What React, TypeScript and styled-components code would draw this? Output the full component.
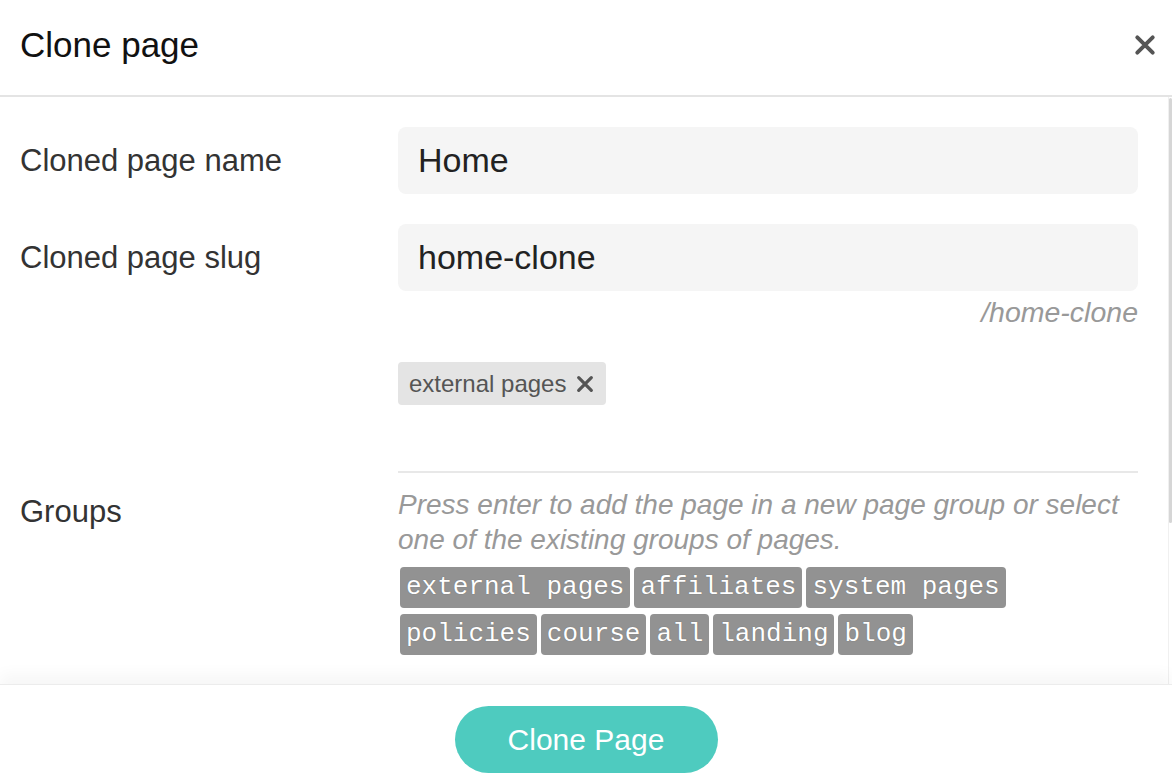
import React from 'react';
import styled, { createGlobalStyle } from 'styled-components';

const Global = createGlobalStyle`
  html, body { margin: 0; padding: 0; background: #fff; }
  body { font-family: "Liberation Sans", Arial, Helvetica, sans-serif; }
  * { box-sizing: border-box; }
`;

const Modal = styled.div`
  width: 1172px;
  height: 782px;
  display: flex;
  flex-direction: column;
  background: #fff;
  overflow: hidden;
`;

const Header = styled.header`
  height: 97px;
  flex: none;
  display: flex;
  align-items: center;
  justify-content: space-between;
  padding: 0 16px 6px 20px;
  border-bottom: 2px solid #e4e4e4;
`;

const Title = styled.h1`
  margin: 0;
  font-size: 35px;
  font-weight: 400;
  line-height: 1;
  color: #111;
`;

const CloseButton = styled.button`
  border: 0;
  background: none;
  padding: 0;
  width: 22px;
  height: 22px;
  display: flex;
  align-items: center;
  justify-content: center;
  cursor: pointer;
`;

const Body = styled.div`
  flex: 1;
  display: flex;
  min-height: 0;
`;

const Content = styled.div`
  flex: 1;
  padding: 30px 30px 0 20px;
`;

const ScrollTrack = styled.div`
  width: 4px;
  flex: none;
  display: flex;
  flex-direction: column;
  padding: 1px 0 4px;
  border-left: 1px solid #f0f0f0;
`;

const ScrollThumb = styled.div`
  height: 425px;
  background: #d6d6d6;
  border-radius: 2px;
`;

const Row = styled.div<{ $mt?: number }>`
  display: grid;
  grid-template-columns: 378px 1fr;
  align-items: start;
  margin-top: ${(p) => p.$mt ?? 0}px;
`;

const Label = styled.label<{ $lh?: number }>`
  font-size: 31px;
  color: #333;
  line-height: ${(p) => p.$lh ?? 67}px;
`;

const Field = styled.div`
  display: flex;
  flex-direction: column;
`;

const Input = styled.input`
  height: 67px;
  width: 100%;
  border: 0;
  outline: none;
  border-radius: 8px;
  background: #f5f5f5;
  padding: 0 20px;
  font-family: "Liberation Sans", Arial, sans-serif;
  font-size: 34px;
  color: #222;
`;

const Hint = styled.div`
  margin-top: 4px;
  text-align: right;
  font-style: italic;
  font-size: 28.5px;
  line-height: 34px;
  color: #999;
`;

const Tag = styled.span`
  display: inline-flex;
  align-items: center;
  gap: 10px;
  height: 43px;
  margin-top: 33px;
  padding: 0 12px 0 11px;
  border-radius: 4px;
  background: #e4e4e4;
  color: #555;
  font-size: 24px;
  align-self: flex-start;
`;

const Divider = styled.hr`
  margin: 66px 0 0;
  border: 0;
  border-top: 2px solid #e8e8e8;
`;

const Help = styled.p`
  margin: 0;
  font-style: italic;
  font-size: 28px;
  line-height: 35px;
  color: #999;
`;

const Chips = styled.div`
  margin-top: 10px;
  display: flex;
  flex-wrap: wrap;
  gap: 6px 4px;
  padding-left: 2px;
`;

const Chip = styled.span`
  display: inline-block;
  height: 41px;
  line-height: 41px;
  padding: 0 6px;
  border-radius: 4px;
  background: #929292;
  color: #fff;
  font-family: "Liberation Mono", "Courier New", monospace;
  font-size: 26px;
  text-shadow: 0 0 1px rgba(0, 0, 0, 0.35);
`;

const Footer = styled.footer`
  height: 98px;
  flex: none;
  display: flex;
  justify-content: center;
  padding-top: 21px;
  border-top: 1px solid #ececec;
  box-shadow: 0 -10px 14px rgba(0, 0, 0, 0.035);
  position: relative;
  background: #fff;
`;

const PrimaryButton = styled.button`
  width: 263px;
  height: 67px;
  border: 0;
  border-radius: 34px;
  background: #4ecbbf;
  color: #fff;
  font-family: "Liberation Sans", Arial, sans-serif;
  font-size: 30px;
  cursor: pointer;
`;

const XIcon = ({ size, stroke, color }: { size: number; stroke: number; color: string }) => (
  <svg width={size} height={size} viewBox="0 0 20 20">
    <path d="M3 3 L17 17 M17 3 L3 17" stroke={color} strokeWidth={stroke} strokeLinecap="round" />
  </svg>
);

const groups = ['external pages', 'affiliates', 'system pages', 'policies', 'course', 'all', 'landing', 'blog'];

export default function App() {
  return (
    <>
      <Global />
      <Modal>
        <Header>
          <Title>Clone page</Title>
          <CloseButton aria-label="Close">
            <XIcon size={22} stroke={3.6} color="#555" />
          </CloseButton>
        </Header>
        <Body>
          <Content>
            <Row>
              <Label>Cloned page name</Label>
              <Input defaultValue="Home" />
            </Row>
            <Row $mt={30}>
              <Label>Cloned page slug</Label>
              <Field>
                <Input defaultValue="home-clone" />
                <Hint>/home-clone</Hint>
                <Tag>
                  external pages
                  <XIcon size={18} stroke={3.6} color="#555" />
                </Tag>
                <Divider />
              </Field>
            </Row>
            <Row $mt={14}>
              <Label $lh={50}>Groups</Label>
              <Field>
                <Help>
                  Press enter to add the page in a new page group or select one of the existing groups of pages.
                </Help>
                <Chips>
                  {groups.map((g) => (
                    <Chip key={g}>{g}</Chip>
                  ))}
                </Chips>
              </Field>
            </Row>
          </Content>
          <ScrollTrack>
            <ScrollThumb />
          </ScrollTrack>
        </Body>
        <Footer>
          <PrimaryButton>Clone Page</PrimaryButton>
        </Footer>
      </Modal>
    </>
  );
}
